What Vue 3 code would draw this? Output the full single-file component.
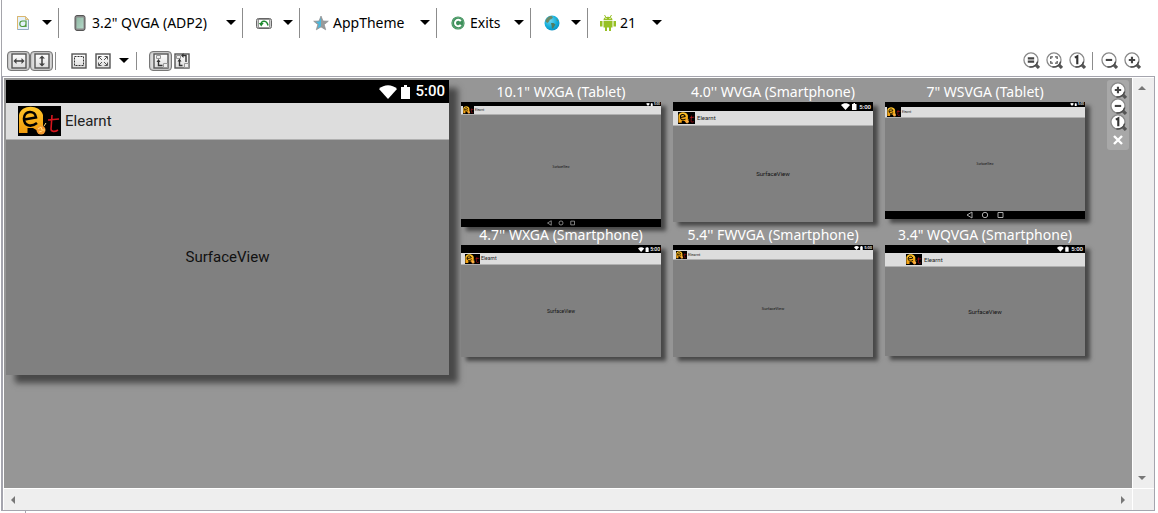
<script setup>
const menus = [
  { id: 'config', title: 'Configuration', icon: 'file', text: '' },
  { id: 'device', title: 'Device', icon: 'phone', text: '3.2" QVGA (ADP2)' },
  { id: 'orient', title: 'Orientation', icon: 'rotate', text: '' },
  { id: 'theme', title: 'Theme', icon: 'star', text: 'AppTheme' },
  { id: 'activity', title: 'Activity', icon: 'class', text: 'Exits' },
  { id: 'locale', title: 'Locale', icon: 'globe', text: '' },
  { id: 'api', title: 'API level', icon: 'android', text: '21' },
]
const zooms = [
  { id: 'actual', icon: 'z-equal', title: 'Emulate real size' },
  { id: 'fit', icon: 'z-fit', title: 'Zoom to fit' },
  { id: 'one', icon: 'z-one', title: 'Zoom to 100%' },
]
const zoomSteps = [
  { id: 'out', icon: 'z-minus', title: 'Zoom out' },
  { id: 'in', icon: 'z-plus', title: 'Zoom in' },
]
const floating = [
  { id: 'f-in', icon: 'z-plus', title: 'Zoom in' },
  { id: 'f-out', icon: 'z-minus', title: 'Zoom out' },
  { id: 'f-one', icon: 'z-one', title: 'Zoom to 100%' },
]
const mainDevice = { id: 'qvga', label: '', nav: false }
const previews = [
  { id: 'wxga10', label: '10.1" WXGA (Tablet)', nav: true },
  { id: 'wvga', label: "4.0'' WVGA (Smartphone)", nav: false },
  { id: 'wsvga', label: '7" WSVGA (Tablet)', nav: true },
  { id: 'wxga4', label: "4.7'' WXGA (Smartphone)", nav: false },
  { id: 'fwvga', label: "5.4'' FWVGA (Smartphone)", nav: false },
  { id: 'wqvga', label: '3.4" WQVGA (Smartphone)', nav: false },
]
const devices = [mainDevice, ...previews]
</script>

<template>
  <div class="editor">
    <svg class="defs" aria-hidden="true">
      <defs>
        <linearGradient id="g-phone" x1="0" y1="0" x2="1" y2="1">
          <stop offset="0" stop-color="#8fb8a4" /><stop offset="1" stop-color="#b5d8c8" />
        </linearGradient>
        <linearGradient id="g-orange" x1="0" y1="0" x2="0" y2="1">
          <stop offset="0" stop-color="#ffc629" /><stop offset="1" stop-color="#f09a0c" />
        </linearGradient>
        <linearGradient id="g-btn" x1="0" y1="0" x2="0" y2="1">
          <stop offset="0" stop-color="#fff" /><stop offset="1" stop-color="#dcdcdc" />
        </linearGradient>
        <radialGradient id="g-globe" cx=".4" cy=".35" r=".7">
          <stop offset="0" stop-color="#6cd4ee" /><stop offset=".6" stop-color="#14b0dc" /><stop offset="1" stop-color="#0b8fc0" />
        </radialGradient>
        <symbol id="file" viewBox="0 0 16 16">
          <path d="M2.500 1.500h8l3 3v10h-11z" fill="#e3f1fb" stroke="#92acbf" />
          <path d="M2.500 14V1.500H10" fill="none" stroke="#dcb66c" />
          <path d="M10.500 1.500v3h3z" fill="#f6dfa5" stroke="#d9bd82" />
          <path d="M11 6H7.500C4 6 4 11.500 7 11.500h1c1.500 0 3-1 3-2.500zM11 5.500v6.500" fill="none" stroke="#4e9b3c" stroke-width="1.200" />
        </symbol>
        <symbol id="phone" viewBox="0 0 16 16">
          <rect x="3" y=".5" width="10" height="15" rx="2" fill="#888" stroke="#555" />
          <rect x="4.500" y="2.500" width="7" height="11" fill="url(#g-phone)" />
        </symbol>
        <symbol id="rotate" viewBox="0 0 16 16">
          <rect x=".5" y="3.500" width="15" height="10" rx="2" fill="#ccc" stroke="#666" />
          <rect x="2.500" y="4.500" width="11" height="8" fill="#fff" stroke="#777" stroke-width=".7" />
          <path d="M5 9C5.500 5 11 5 12 10.500" fill="none" stroke="#1f8a30" stroke-width="1.500" />
          <path d="M2.800 8h4.900L5.200 11.500z" fill="#1f8a30" />
        </symbol>
        <symbol id="star" viewBox="0 0 16 16">
          <path d="M8 1l2 5 5.300.2-4.100 3.400 1.500 5.200L8 11.900l-4.700 2.900 1.500-5.200L.7 6.200 6 6z" fill="#9a9a9a" stroke="#8a8f92" stroke-width=".7" />
          <path d="M8 2.500v8.700l-3.400 2.200 1.200-4.200L2.700 6.700l3.700-.2z" fill="#48b9df" />
        </symbol>
        <symbol id="class" viewBox="0 0 16 16">
          <circle cx="8" cy="8" r="6.600" fill="#3e8f5b" />
          <circle cx="8" cy="8" r="5.600" fill="none" stroke="#69ad80" stroke-width=".8" />
          <path d="M10.800 6.100A3.200 3.200 0 1 0 10.800 9.900" fill="none" stroke="#fff" stroke-width="2" />
        </symbol>
        <symbol id="globe" viewBox="0 0 16 16">
          <circle cx="8" cy="8" r="7.500" fill="url(#g-globe)" />
          <path d="M2 4.500C4 1.500 6 .8 7.500 1l1.500 1.500-1.500 1.400-1.700.9-.8 1.700L3.500 8 1.500 6.500z" fill="#6a8a68" />
          <path d="M7 8l2.500 0 2 1.600-1.300 1.900-1.300 2.200-1.100-.7-.2-2.400z" fill="#4f7c62" />
          <path d="M12.500 3.500l1.700 2-1.200 1z" fill="#62906d" />
        </symbol>
        <symbol id="android" viewBox="0 0 16 16">
          <path d="M3.500 5C3.500 .6 12.500 .6 12.500 5zM3.500 5.800h9v6.700h-9zM0 6h2.500v5.500H0zM13.500 6H16v5.500h-2.500zM5 12h2v4H5zM9 12h2v4H9z" fill="#97c024" />
          <path d="M4.500 0l1.500 2.500M11.500 0L10 2.500" stroke="#97c024" />
          <path d="M5.500 3h1v1h-1zM9.500 3h1v1h-1z" fill="#fff" />
        </symbol>
        <symbol id="width" viewBox="0 0 16 16">
          <rect x="1" y="1" width="14" height="14" fill="url(#g-btn)" stroke="#555" stroke-width="1.400" />
          <path d="M4 8h8" stroke="#333" stroke-width="1.400" />
          <path d="M2.500 8L5.500 5v6zM13.500 8l-3-3v6z" fill="#444" />
        </symbol>
        <symbol id="height" viewBox="0 0 16 16">
          <rect x="1" y="1" width="14" height="14" fill="url(#g-btn)" stroke="#555" stroke-width="1.400" />
          <path d="M8 4v8" stroke="#333" stroke-width="1.400" />
          <path d="M8 2.500L5 5.500h6zM8 13.500l-3-3h6z" fill="#444" />
        </symbol>
        <symbol id="marquee" viewBox="0 0 16 16">
          <rect x="1" y="1" width="14" height="14" fill="url(#g-btn)" stroke="#555" stroke-width="1.400" />
          <rect x="3.500" y="3.500" width="9" height="9" fill="none" stroke="#333" stroke-dasharray="2 1" />
        </symbol>
        <symbol id="expand" viewBox="0 0 16 16">
          <rect x="1" y="1" width="14" height="14" fill="url(#g-btn)" stroke="#555" stroke-width="1.400" />
          <path d="M3.500 6.500v-3h3M9.500 3.500h3v3M12.500 9.500v3h-3M6.500 12.500h-3v-3M4 4l3 3M12 4L9 7M12 12L9 9M4 12l3-3" fill="none" stroke="#555" />
        </symbol>
        <symbol id="tree" viewBox="0 0 16 16">
          <rect x="1" y="1" width="14" height="14" fill="url(#g-btn)" stroke="#555" stroke-width="1.400" />
          <path d="M3.500 2.500h4v3h-4zM10.500 10.500h4v4h-4z" fill="#eee" stroke="#999" />
          <path d="M5.500 8v4.500H9.500" fill="none" stroke="#333" stroke-width="1.400" />
          <path d="M3.500 9L5.500 6 7.500 9z" fill="#333" />
        </symbol>
        <symbol id="tree2" viewBox="0 0 16 16">
          <rect x="1" y="1" width="14" height="14" fill="url(#g-btn)" stroke="#555" stroke-width="1.400" />
          <path d="M2.500 2.500h4v3h-4zM10.500 10.500h4v4h-4z" fill="#eee" stroke="#999" />
          <path d="M5.500 7v5.500H8.500M12 9V2.500H8" fill="none" stroke="#333" stroke-width="1.400" />
          <path d="M3.500 8.500L5.500 5.500 7.500 8.500zM9.500 0v5L7 2.500z" fill="#333" />
        </symbol>
        <symbol id="lens" viewBox="0 0 16 16">
          <path d="M11 11l4 4" stroke="#555" stroke-width="3" />
          <circle cx="7.500" cy="7.500" r="6.600" fill="#fff" stroke="#888" stroke-width="1.200" />
          <path d="M13.800 9A6.600 6.600 0 0 1 6 14" fill="none" stroke="#4c4c4c" stroke-width="1.400" />
        </symbol>
        <symbol id="z-equal" viewBox="0 0 16 16"><use href="#lens" /><path d="M4.500 6h6M4.500 9h6" stroke="#444" stroke-width="2" /></symbol>
        <symbol id="z-fit" viewBox="0 0 16 16"><use href="#lens" /><path d="M4.500 6.500v-2h2M8.500 4.500h2v2M10.500 8.500v2h-2M6.500 10.500h-2v-2" fill="none" stroke="#555" stroke-width="1.200" /></symbol>
        <symbol id="z-one" viewBox="0 0 16 16"><use href="#lens" /><path d="M5.500 5.300L7.800 4v7.500" fill="none" stroke="#333" stroke-width="2" /></symbol>
        <symbol id="z-minus" viewBox="0 0 16 16"><use href="#lens" /><path d="M4.500 7.500h6" stroke="#444" stroke-width="2" /></symbol>
        <symbol id="z-plus" viewBox="0 0 16 16"><use href="#lens" /><path d="M4.500 7.500h6M7.500 4.500v6" stroke="#444" stroke-width="2" /></symbol>
        <symbol id="logo" viewBox="0 0 43 30" preserveAspectRatio="none">
          <path d="M0 0h43v30H0z" fill="#000" />
          <path d="M1 27V9C3-2 22-2 25 9v14l-5 2-5-3H9.500v5z" fill="url(#g-orange)" />
          <path d="M6.500 13.500L18 11.500C17.500 4 6 4 6 12.500C6 20 13 21.500 19 17" fill="none" stroke="#000" stroke-width="2.600" />
          <circle cx="23" cy="24" r="4.500" fill="#f59b32" />
          <path d="M20 23l3-2 1 3 3 0M21 26l3-1M26 20l2-3" stroke="#ffdd7c" fill="none" />
          <path d="M34 9l-1 14c0 3 4 3 7 1M30 14l11-1" fill="none" stroke="#d5151d" stroke-width="1.600" />
        </symbol>
        <symbol id="signal" viewBox="0 0 32 14">
          <path d="M0 4C5-1 13-1 18 4L9 14z" fill="#fff" />
          <path d="M22 2h3V0h3v2h3v12h-9z" fill="#fff" />
        </symbol>
        <symbol id="navkeys" viewBox="0 0 38 8">
          <path d="M6 1v6L1 4zM32 1.500h5v5h-5z" fill="none" stroke="#aaa" />
          <circle cx="19" cy="4" r="2.700" fill="none" stroke="#aaa" />
        </symbol>
      </defs>
    </svg>

    <header class="toolbar menus">
      <button v-for="m in menus" :key="m.id" class="menu" :class="m.id" :aria-label="m.title" aria-haspopup="menu">
        <svg class="icon"><use :href="'#' + m.icon" /></svg>
        <span v-if="m.text" class="menu-text">{{ m.text }}</span>
        <span class="arrow"></span>
      </button>
    </header>

    <div class="toolbar tools">
      <div class="group">
        <button class="tool on" aria-label="Toggle fill width" aria-pressed="true"><svg class="icon"><use href="#width" /></svg></button>
        <button class="tool on" aria-label="Toggle fill height" aria-pressed="true"><svg class="icon"><use href="#height" /></svg></button>
      </div>
      <span class="rule"></span>
      <div class="group outline">
        <button class="tool" aria-label="Show bounds"><svg class="icon"><use href="#marquee" /></svg></button>
        <button class="tool" aria-label="Margins"><svg class="icon"><use href="#expand" /></svg></button>
        <button class="tool more" aria-label="More margins"><span class="arrow"></span></button>
      </div>
      <span class="rule"></span>
      <div class="group trees">
        <button class="tool on" aria-label="Show structure" aria-pressed="true"><svg class="icon"><use href="#tree" /></svg></button>
        <button class="tool" aria-label="Show included"><svg class="icon"><use href="#tree2" /></svg></button>
      </div>
      <div class="group zooms">
        <button v-for="z in zooms" :key="z.id" class="tool" :aria-label="z.title"><svg class="icon lens"><use :href="'#' + z.icon" /></svg></button>
        <span class="rule"></span>
        <button v-for="z in zoomSteps" :key="z.id" class="tool" :aria-label="z.title"><svg class="icon lens"><use :href="'#' + z.icon" /></svg></button>
      </div>
    </div>

    <main class="viewport">
      <section class="canvas">
        <figure v-for="d in devices" :key="d.id" class="device" :class="d.id">
          <figcaption v-if="d.label">{{ d.label }}</figcaption>
          <div class="screen">
            <div class="status"><svg class="signal"><use href="#signal" /></svg><span>5:00</span></div>
            <div class="actionbar"><svg class="logo"><use href="#logo" /></svg><span>Elearnt</span></div>
            <div class="surface">SurfaceView</div>
            <div v-if="d.nav" class="nav"><svg class="navkeys"><use href="#navkeys" /></svg></div>
          </div>
        </figure>
        <div class="float">
          <button v-for="f in floating" :key="f.id" :aria-label="f.title"><svg class="icon lens"><use :href="'#' + f.icon" /></svg></button>
          <button class="close" aria-label="Close"><svg class="icon" viewBox="0 0 16 16"><path d="M4 4l8 8M12 4l-8 8" stroke="#fff" stroke-width="2.400" /></svg></button>
        </div>
      </section>
      <div class="bar vertical">
        <button aria-label="Scroll up"><span class="tri up"></span></button>
        <button aria-label="Scroll down"><span class="tri down"></span></button>
      </div>
      <div class="bar horizontal">
        <button aria-label="Scroll left"><span class="tri left"></span></button>
        <button aria-label="Scroll right"><span class="tri right"></span></button>
      </div>
      <div class="corner"></div>
    </main>
    <footer class="foot"></footer>
  </div>
</template>

<style>
body { margin: 0; background: #fff; }
</style>

<style scoped>
.editor { display: flex; flex-direction: column; height: 100vh; font-family: "Noto Sans", "Open Sans", sans-serif; font-size: 14px; color: #000; overflow: hidden; }
.defs { position: absolute; width: 0; height: 0; }
button { border: 0; padding: 0; margin: 0; background: none; font: inherit; color: inherit; display: flex; align-items: center; justify-content: center; }
.icon { width: 16px; height: 16px; flex: none; }
.lens { width: 17px; height: 17px; }
.arrow { width: 0; height: 0; border: 5px solid transparent; border-top-color: #000; border-bottom: 0; flex: none; }

.toolbar { display: flex; align-items: center; border-left: 1px solid #a5a5ab; margin-left: 1px; flex: none; }
.menus { height: 45px; }
.menu { height: 30px; box-sizing: border-box; border-right: 1px solid #8c8c8c; padding: 0 6px 0 13px; justify-content: flex-start; gap: 4px; white-space: nowrap; }
.menu .arrow { margin-left: auto; }
.config { width: 57px; }
.menu.device { width: 184px; }
.orient, .locale { width: 57px; }
.theme { width: 137px; }
.activity { width: 94px; }
.api { width: 80px; border-right: 0; padding-left: 12px; }
.menu-text { font-size: 14px; line-height: 20px; }

.tools { height: 31px; padding-right: 17px; }
.group { display: flex; align-items: center; }
.group:first-child { padding-left: 5px; gap: 1px; }
.tool { height: 20px; }
.tool.on { box-sizing: border-box; width: 23px; border: 1px solid #777; border-radius: 4px; background: #dcdcdc; box-shadow: inset 0 0 2px #888; }
.group:first-child { gap: 0; }
.rule { width: 1px; height: 18px; background: #8c8c8c; margin-left: 2px; }
.outline { padding: 0 5px 0 15px; gap: 8px; }
.trees { padding-left: 12px; gap: 2px; }
.zooms { margin-left: auto; gap: 6px; }
.zooms .rule { margin: 0 2px 0 0; }

.viewport { flex: 1; min-height: 0; display: grid; grid-template-columns: 1fr 21px; grid-template-rows: 1fr 21px; gap: 1px; margin: 0 3px 0 1px; border: 1px solid #a5a5ae; border-left-width: 2px; padding: 1px 0 0 1px; background: #fff; }
.canvas { position: relative; overflow: hidden; background: #969696; display: grid; grid-template-columns: 443px repeat(3, 200px); grid-template-rows: 143px 143px; column-gap: 12px; align-content: start; padding-left: 2px; }
.canvas .device { margin: 0; width: auto; }
figcaption { height: 24px; line-height: 28px; text-align: center; color: #fff; white-space: nowrap; position: relative; z-index: 1; }
.screen { display: flex; flex-direction: column; height: var(--h); background: #808080; box-shadow: 5px 4px 4px #484848; font-family: Roboto, sans-serif; color: #222; font-size: var(--fs); line-height: 1; }
.status { height: var(--st); background: #000; color: #fff; font-weight: 500; display: flex; align-items: center; justify-content: flex-end; gap: var(--g); padding-right: var(--g); flex: none; }
.signal { width: var(--sw); height: var(--sh); }
.actionbar { box-sizing: border-box; height: var(--ab); background: #ddd; border-bottom: 1px solid #b0b0b0; display: flex; align-items: center; gap: var(--g); padding-left: var(--pl); flex: none; }
.logo { width: var(--lw); height: var(--lh); }
.surface { flex: 1; display: flex; align-items: center; justify-content: center; color: #111; }
.nav { height: 8px; background: #000; display: flex; justify-content: center; align-items: center; flex: none; }
.navkeys { width: 38px; height: 8px; }
.wxga10 .navkeys { width: 30px; height: 6px; }

.qvga { grid-row: span 2; padding-top: 2px; }
.qvga .screen { --h: 295px; --fs: 15px; --st: 23px; --ab: 37px; --g: 4px; --sw: 32px; --sh: 14px; --pl: 12px; --lw: 43px; --lh: 30px; box-shadow: 9px 8px 6px #484848; }
.wxga10 .screen { --h: 125px; --fs: 3px; --st: 4px; --ab: 9px; --g: 1px; --sw: 7px; --sh: 3px; --pl: 2px; --lw: 11px; --lh: 8px; }
.wvga .screen { --h: 120px; --fs: 6px; --st: 9px; --ab: 15px; --g: 2px; --sw: 16px; --sh: 7px; --pl: 5px; --lw: 17px; --lh: 12px; }
.wsvga .screen { --h: 117px; --fs: 3px; --st: 5px; --ab: 11px; --g: 1px; --sw: 7px; --sh: 3px; --pl: 2px; --lw: 14px; --lh: 10px; }
.wxga4 .screen { --h: 112px; --fs: 5px; --st: 8px; --ab: 12px; --g: 1px; --sw: 11px; --sh: 5px; --pl: 4px; --lw: 15px; --lh: 10px; }
.fwvga .screen { --h: 112px; --fs: 4px; --st: 5px; --ab: 10px; --g: 1px; --sw: 9px; --sh: 4px; --pl: 3px; --lw: 11px; --lh: 8px; }
.wqvga .screen { --h: 111px; --fs: 6px; --st: 8px; --ab: 14px; --g: 2px; --sw: 12px; --sh: 6px; --pl: 21px; --lw: 16px; --lh: 11px; }

.float { position: absolute; top: 2px; right: 3px; width: 22px; height: 70px; border-radius: 3px; background: #a8a8a8; display: flex; flex-direction: column; align-items: center; padding-top: 2px; box-sizing: border-box; }
.float button { height: 16px; }
.float .close { height: 19px; }

.bar { background: #eee; box-sizing: border-box; display: flex; justify-content: space-between; }
.bar button { width: 18px; height: 20px; }
.vertical { flex-direction: column; align-items: flex-start; }
.horizontal { align-items: center; }
.corner { background: #eee; }
.tri { width: 0; height: 0; border: 4px solid transparent; }
.up { border-bottom-color: #777; border-top: 0; }
.down { border-top-color: #777; border-bottom: 0; }
.left { border-right-color: #777; border-left: 0; }
.right { border-left-color: #777; border-right: 0; }
.foot { height: 2px; flex: none; margin-left: 1px; width: 24px; border-right: 1px solid #a5a5ae; }
</style>
